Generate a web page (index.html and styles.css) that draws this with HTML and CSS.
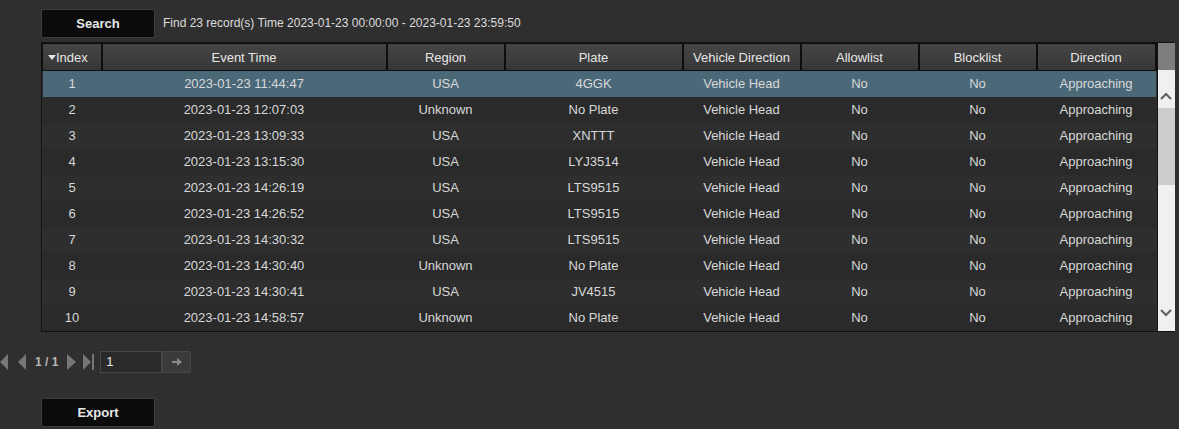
FILE: index.html
```html
<!DOCTYPE html>
<html lang="en">
<head>
  <meta charset="UTF-8" />
  <title>Plate Search</title>
  <link rel="stylesheet" href="styles.css">
</head>
<body>
  <div class="toolbar">
    <button class="btn">Search</button>
    <span class="status">Find 23 record(s) Time 2023-01-23 00:00:00 - 2023-01-23 23:59:50</span>
  </div>

  <div class="grid-wrap">
    <table class="grid">
      <colgroup>
        <col style="width:59px"><col style="width:285px"><col style="width:118px"><col style="width:178px">
        <col style="width:118px"><col style="width:118px"><col style="width:118px"><col style="width:119px">
      </colgroup>
      <thead>
        <tr>
          <th class="sorted"><span class="caret"></span>Index</th>
          <th>Event Time</th>
          <th>Region</th>
          <th>Plate</th>
          <th>Vehicle Direction</th>
          <th>Allowlist</th>
          <th>Blocklist</th>
          <th>Direction</th>
        </tr>
      </thead>
      <tbody>
        <tr class="selected"><td>1</td><td>2023-01-23 11:44:47</td><td>USA</td><td>4GGK</td><td>Vehicle Head</td><td>No</td><td>No</td><td>Approaching</td></tr>
        <tr><td>2</td><td>2023-01-23 12:07:03</td><td>Unknown</td><td>No Plate</td><td>Vehicle Head</td><td>No</td><td>No</td><td>Approaching</td></tr>
        <tr><td>3</td><td>2023-01-23 13:09:33</td><td>USA</td><td>XNTTT</td><td>Vehicle Head</td><td>No</td><td>No</td><td>Approaching</td></tr>
        <tr><td>4</td><td>2023-01-23 13:15:30</td><td>USA</td><td>LYJ3514</td><td>Vehicle Head</td><td>No</td><td>No</td><td>Approaching</td></tr>
        <tr><td>5</td><td>2023-01-23 14:26:19</td><td>USA</td><td>LTS9515</td><td>Vehicle Head</td><td>No</td><td>No</td><td>Approaching</td></tr>
        <tr><td>6</td><td>2023-01-23 14:26:52</td><td>USA</td><td>LTS9515</td><td>Vehicle Head</td><td>No</td><td>No</td><td>Approaching</td></tr>
        <tr><td>7</td><td>2023-01-23 14:30:32</td><td>USA</td><td>LTS9515</td><td>Vehicle Head</td><td>No</td><td>No</td><td>Approaching</td></tr>
        <tr><td>8</td><td>2023-01-23 14:30:40</td><td>Unknown</td><td>No Plate</td><td>Vehicle Head</td><td>No</td><td>No</td><td>Approaching</td></tr>
        <tr><td>9</td><td>2023-01-23 14:30:41</td><td>USA</td><td>JV4515</td><td>Vehicle Head</td><td>No</td><td>No</td><td>Approaching</td></tr>
        <tr><td>10</td><td>2023-01-23 14:58:57</td><td>Unknown</td><td>No Plate</td><td>Vehicle Head</td><td>No</td><td>No</td><td>Approaching</td></tr>
      </tbody>
    </table>
    <div class="scrollbar">
      <div class="sb-corner"></div>
      <div class="sb-track">
        <svg class="sb-arrow" width="12" height="8" viewBox="0 0 12 8"><path d="M1 7 L6 2 L11 7" fill="none" stroke="#606060" stroke-width="2"/></svg>
        <div class="sb-thumb"></div>
        <div class="sb-fill"></div>
        <svg class="sb-arrow" width="12" height="8" viewBox="0 0 12 8"><path d="M1 1 L6 6 L11 1" fill="none" stroke="#606060" stroke-width="2"/></svg>
      </div>
    </div>
  </div>

  <div class="pager">
    <svg class="pg-icon" width="9" height="18" viewBox="0 0 9 18"><path d="M0 9 L8 1 L8 17 Z" fill="#767676"/></svg>
    <svg class="pg-icon prev" width="10" height="18" viewBox="0 0 10 18"><path d="M1 9 L9 1 L9 17 Z" fill="#767676"/></svg>
    <span class="pg-text">1 / 1</span>
    <svg class="pg-icon next" width="11" height="18" viewBox="0 0 11 18"><path d="M10 9 L1 1 L1 17 Z" fill="#767676"/></svg>
    <svg class="pg-icon last" width="13" height="18" viewBox="0 0 13 18"><path d="M9 9 L1 1 L1 17 Z" fill="#767676"/><rect x="10" y="1" width="2" height="16" fill="#767676"/></svg>
    <input class="pg-input" type="text" value="1">
    <button class="pg-go"><svg width="12" height="10" viewBox="0 0 12 10"><path d="M1 4 H6 V1 L11 5 L6 9 V6 H1 Z" fill="#8a8a8a"/></svg></button>
  </div>

  <div class="footer">
    <button class="btn">Export</button>
  </div>
</body>
</html>
```

FILE: styles.css
```css
* {
  margin: 0;
  padding: 0;
  box-sizing: border-box;
}

body {
  background: #2f2f2f;
  color: #dcdcdc;
  font-family: "Liberation Sans", Arial, sans-serif;
  font-size: 13px;
  width: 1179px;
  height: 429px;
  overflow: hidden;
}

.btn {
  width: 114px;
  height: 29px;
  background: #0c0c0c;
  border: 1px solid #3c3c3c;
  border-radius: 2px;
  color: #e8e8e8;
  font-family: inherit;
  font-size: 13px;
  font-weight: bold;
}

.toolbar {
  display: flex;
  align-items: center;
  gap: 8px;
  padding: 8px 0 0 41px;
  height: 38px;
}

.status {
  font-size: 12px;
  color: #dddddd;
}

.grid-wrap {
  display: flex;
  margin: 4px 0 0 41px;
  width: 1133px;
  border: 1px solid #111;
}

.grid {
  border-collapse: collapse;
  table-layout: fixed;
  width: 1113px;
}

.grid th {
  height: 27px;
  background: linear-gradient(#454545, #363636);
  border: 1px solid #0e0e0e;
  border-width: 1px 2px 1px 1px;
  color: #e6e6e6;
  font-weight: normal;
  font-size: 13px;
  text-align: center;
}

.grid th.sorted {
  text-align: left;
  padding-left: 5px;
}

.caret {
  display: inline-block;
  width: 0;
  height: 0;
  border-left: 4px solid transparent;
  border-right: 4px solid transparent;
  border-top: 5px solid #e4e4e4;
  vertical-align: 2px;
}

.grid td {
  height: 26px;
  text-align: center;
  color: #d8d8d8;
  white-space: nowrap;
}

.grid tbody tr:nth-child(even) {
  background: #2a2a2a;
}

.grid tbody tr:nth-child(odd) {
  background: #2e2e2e;
}

.grid tbody tr.selected {
  background: #4b6878;
}

.scrollbar {
  width: 19px;
  display: flex;
  flex-direction: column;
  border-left: 1px solid #111;
}

.sb-corner {
  height: 27px;
  background: #7e7e7e;
}

.sb-track {
  flex: 1;
  background: #f0f0f0;
  display: flex;
  flex-direction: column;
  align-items: center;
  padding: 22px 0 14px;
}

.sb-arrow {
  flex: none;
}

.sb-thumb {
  width: 17px;
  height: 77px;
  margin-top: 8px;
  background: #cdcdcd;
}

.sb-fill {
  flex: 1;
}

.pager {
  display: flex;
  align-items: center;
  height: 22px;
  margin-top: 19px;
}

.pg-icon {
  flex: none;
}

.pg-icon.prev {
  margin-left: 8px;
}

.pg-text {
  margin-left: 8px;
  font-size: 12px;
  font-weight: bold;
  color: #b8b8b8;
}

.pg-icon.next {
  margin-left: 8px;
}

.pg-icon.last {
  margin-left: 5px;
}

.pg-input {
  width: 62px;
  height: 22px;
  margin-left: 5px;
  background: #2a2a2a;
  border: 1px solid #474747;
  color: #e8e8e8;
  font-family: inherit;
  font-size: 13px;
  padding-left: 5px;
}

.pg-go {
  width: 29px;
  height: 22px;
  background: #3a3a3a;
  border: 1px solid #474747;
  border-radius: 2px;
  display: flex;
  align-items: center;
  justify-content: center;
}

.footer {
  padding: 25px 0 0 41px;
}
```
